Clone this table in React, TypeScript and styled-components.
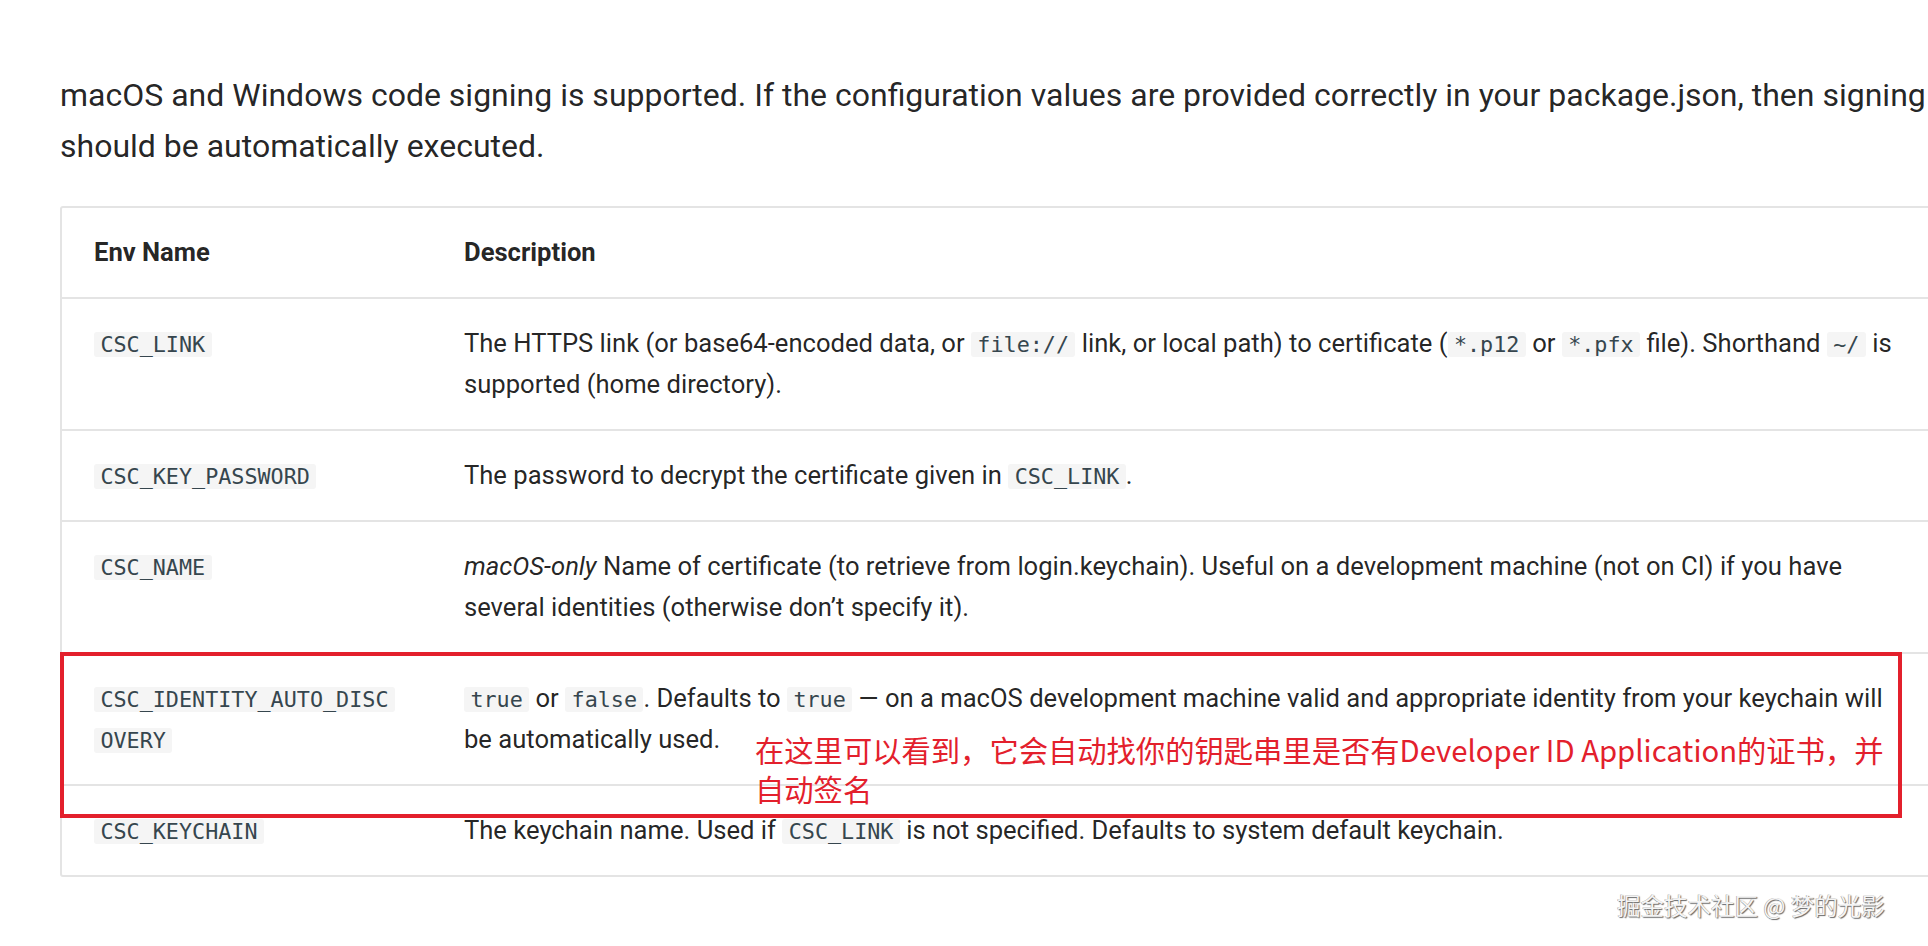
import React from "react";
import styled, { createGlobalStyle } from "styled-components";

const GlobalStyle = createGlobalStyle`
  html, body {
    margin: 0;
    padding: 0;
    background: #ffffff;
    overflow: hidden;
  }
  body {
    font-family: Roboto, "Noto Sans", Arial, sans-serif;
    color: rgba(0, 0, 0, 0.87);
    -webkit-font-smoothing: antialiased;
  }
`;

const Page = styled.main`
  position: relative;
  width: 1928px;
  height: 946px;
  overflow: hidden;
`;

const Content = styled.article`
  box-sizing: border-box;
  width: 1878px;
  padding: 70px 0 0 60px;
`;

const Paragraph = styled.p`
  margin: 0 0 34px;
  font-size: 32px;
  line-height: 51.2px;
  width: 1870px;
`;

const TableWrap = styled.div`
  position: relative;
  width: 1880px;
`;

const Table = styled.table`
  border-collapse: separate;
  border-spacing: 0;
  table-layout: fixed;
  width: 1880px;
  border: 2px solid #e4e4e4;
  border-radius: 3px;
  font-size: 25.6px;
  line-height: 41px;
`;

const Th = styled.th<{ $w?: number }>`
  text-align: left;
  font-weight: 700;
  padding: 24px 32px;
  border-bottom: 2px solid #e4e4e4;
  vertical-align: top;
  ${(p) => (p.$w ? `width: ${p.$w}px;` : "")}
`;

const Td = styled.td<{ $last?: boolean }>`
  padding: 24px 32px;
  vertical-align: top;
  border-bottom: ${(p) => (p.$last ? "none" : "2px solid #e4e4e4")};
`;

const NameCell = styled(Td)`
  word-break: break-all;
`;

const Code = styled.code`
  font-family: "DejaVu Sans Mono", "Liberation Mono", monospace;
  font-size: 21.76px;
  line-height: 1;
  color: #36464e;
  background: #f5f5f5;
  border-radius: 3px;
  padding: 0 6.4px;
  -webkit-box-decoration-break: clone;
  box-decoration-break: clone;
`;

const Em = styled.em`
  font-style: italic;
`;

const Highlight = styled.div`
  position: absolute;
  left: 0;
  top: 446px;
  width: 1842px;
  height: 166px;
  box-sizing: border-box;
  border: 4px solid #e3202c;
  pointer-events: none;
`;

const Note = styled.div`
  position: absolute;
  left: 695px;
  top: 524px;
  font-family: "Noto Sans CJK SC", "Noto Sans", sans-serif;
  font-size: 29.3px;
  line-height: 38.5px;
  color: #e3202c;
  white-space: nowrap;
`;

const Watermark = styled.div`
  position: absolute;
  left: 1617px;
  top: 889px;
  font-family: "Noto Sans CJK SC", sans-serif;
  font-size: 23.5px;
  line-height: 32px;
  color: #f4f4f4;
  text-shadow: 1px 1px 1px #666, -0.5px -0.5px 0.5px #999;
  white-space: nowrap;
`;

type Row = { name: string; desc: React.ReactNode };

const rows: Row[] = [
  {
    name: "CSC_LINK",
    desc: (
      <>
        The HTTPS link (or base64-encoded data, or <Code>file://</Code> link, or local path) to
        certificate (<Code>*.p12</Code> or <Code>*.pfx</Code> file). Shorthand <Code>~/</Code> is
        <br />
        supported (home directory).
      </>
    ),
  },
  {
    name: "CSC_KEY_PASSWORD",
    desc: (
      <>
        The password to decrypt the certificate given in <Code>CSC_LINK</Code>.
      </>
    ),
  },
  {
    name: "CSC_NAME",
    desc: (
      <>
        <Em>macOS-only</Em> Name of certificate (to retrieve from login.keychain). Useful on a
        development machine (not on CI) if you have
        <br />
        several identities (otherwise don’t specify it).
      </>
    ),
  },
  {
    name: "CSC_IDENTITY_AUTO_DISCOVERY",
    desc: (
      <>
        <Code>true</Code> or <Code>false</Code>. Defaults to <Code>true</Code> — on a macOS
        development machine valid and appropriate identity from your keychain will
        <br />
        be automatically used.
      </>
    ),
  },
  {
    name: "CSC_KEYCHAIN",
    desc: (
      <>
        The keychain name. Used if <Code>CSC_LINK</Code> is not specified. Defaults to system
        default keychain.
      </>
    ),
  },
];

export default function App() {
  return (
    <Page>
      <GlobalStyle />
      <Content>
        <Paragraph>
          macOS and Windows code signing is supported. If the configuration values are provided
          correctly in your package.json, then signing should be automatically executed.
        </Paragraph>
        <TableWrap>
          <Table>
            <thead>
              <tr>
                <Th $w={306}>Env Name</Th>
                <Th>Description</Th>
              </tr>
            </thead>
            <tbody>
              {rows.map((r, i) => (
                <tr key={r.name}>
                  <NameCell $last={i === rows.length - 1}>
                    <Code>{r.name}</Code>
                  </NameCell>
                  <Td $last={i === rows.length - 1}>{r.desc}</Td>
                </tr>
              ))}
            </tbody>
          </Table>
          <Highlight />
          <Note>
            在这里可以看到，它会自动找你的钥匙串里是否有Developer ID Application的证书，并
            <br />
            自动签名
          </Note>
        </TableWrap>
      </Content>
      <Watermark>掘金技术社区 @ 梦的光影</Watermark>
    </Page>
  );
}
